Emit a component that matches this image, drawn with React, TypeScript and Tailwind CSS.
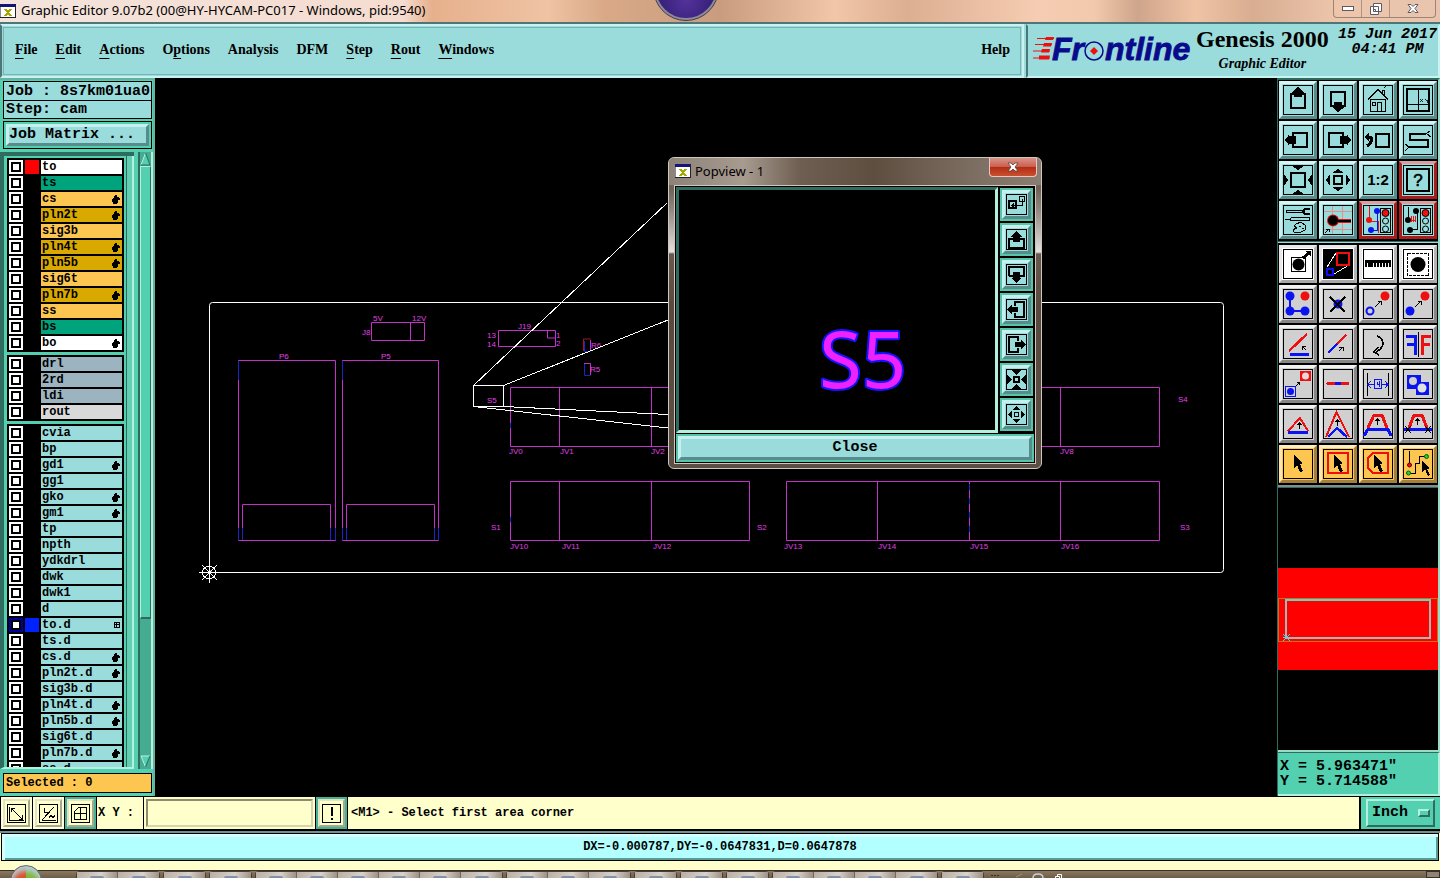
import type { ReactNode } from 'react';

const MONO = "font-['Liberation_Mono',monospace] font-bold";
const SERIF = "font-['Liberation_Serif',serif] font-bold";
const UI = "font-['Noto_Sans',sans-serif]";

/* ---------- layer data ---------- */

type Layer = { name: string; bg: string; hand?: boolean; grid?: boolean; swatch?: string; active?: boolean };

const W = 'bg-white';
const G = 'bg-[#00a47c]';
const A = 'bg-[#fcc650]';
const D = 'bg-[#d9a900]';
const B = 'bg-[#9bb4c0]';
const C = 'bg-[#9adbdb]';

const layerGroups: Layer[][] = [
  [
    { name: 'to', bg: W, swatch: 'bg-[#ff0000]' },
    { name: 'ts', bg: G },
    { name: 'cs', bg: A, hand: true },
    { name: 'pln2t', bg: D, hand: true },
    { name: 'sig3b', bg: A },
    { name: 'pln4t', bg: D, hand: true },
    { name: 'pln5b', bg: D, hand: true },
    { name: 'sig6t', bg: A },
    { name: 'pln7b', bg: D, hand: true },
    { name: 'ss', bg: A },
    { name: 'bs', bg: G },
    { name: 'bo', bg: W, hand: true },
  ],
  [
    { name: 'drl', bg: B },
    { name: '2rd', bg: B },
    { name: 'ldi', bg: B },
    { name: 'rout', bg: 'bg-[#d9d9d9]' },
  ],
  [
    { name: 'cvia', bg: C },
    { name: 'bp', bg: C },
    { name: 'gd1', bg: C, hand: true },
    { name: 'gg1', bg: C },
    { name: 'gko', bg: C, hand: true },
    { name: 'gm1', bg: C, hand: true },
    { name: 'tp', bg: C },
    { name: 'npth', bg: C },
    { name: 'ydkdrl', bg: C },
    { name: 'dwk', bg: C },
    { name: 'dwk1', bg: C },
    { name: 'd', bg: C },
    { name: 'to.d', bg: C, grid: true, swatch: 'bg-[#0022ff]', active: true },
    { name: 'ts.d', bg: C },
    { name: 'cs.d', bg: C, hand: true },
    { name: 'pln2t.d', bg: C, hand: true },
    { name: 'sig3b.d', bg: C },
    { name: 'pln4t.d', bg: C, hand: true },
    { name: 'pln5b.d', bg: C, hand: true },
    { name: 'sig6t.d', bg: C },
    { name: 'pln7b.d', bg: C, hand: true },
    { name: 'ss.d', bg: C },
  ],
];

/* ---------- small pieces ---------- */

function HandIcon() {
  return (
    <svg width="8" height="9" viewBox="0 0 8 9" shapeRendering="crispEdges" aria-hidden="true">
      <path d="M3 0h2v2h2v1h1v2H6v3H5v1H1V7H0V4h1V3h1V1h1z" />
    </svg>
  );
}

function GridMark() {
  return (
    <svg width="6" height="6" viewBox="0 0 6 6" shapeRendering="crispEdges" aria-hidden="true">
      <path d="M.5.5h4.500v4.500h-4.500zM2.500.5v4.500M.5 2.500h4.500" fill="none" stroke="#000" />
    </svg>
  );
}

function LayerRow({ layer }: { layer: Layer }) {
  const id = 'layer-' + layer.name;
  return (
    <li className="mb-0.5 flex h-3.5 gap-0.5">
      <input
        id={id}
        type="checkbox"
        className={
          'size-3.5 shrink-0 appearance-none border-2 bg-white shadow-[inset_0_0_0_2px_#000] ' +
          (layer.active ? 'border-[#0000a0]' : 'border-white')
        }
      />
      <span className={'size-3.5 shrink-0 ' + (layer.swatch ?? '')} />
      <label
        htmlFor={id}
        className={'flex flex-1 items-center justify-between overflow-hidden pl-px pr-0.5 text-[12px] leading-[14px] ' + layer.bg}
      >
        {layer.name}
        {layer.hand && <HandIcon />}
        {layer.grid && <GridMark />}
      </label>
    </li>
  );
}

function XIcon() {
  return (
    <svg width="16" height="16" viewBox="0 0 16 16" className="shrink-0" shapeRendering="crispEdges" aria-hidden="true">
      <rect x="0" y="1" width="15" height="13" fill="#fff" stroke="#8a8a8a" />
      <rect x="0" y="1" width="16" height="3" fill="#14147a" />
      <path d="M0 14.500h16M15.500 2v13" stroke="#222" />
      <path d="M5 6l6 7M11 6l-6 7" stroke="#a5a800" strokeWidth="2" />
    </svg>
  );
}

/* ---------- toolbar icons, drawn on a 30 x 30 grid ---------- */

type Tone = 'cyan' | 'red' | 'white' | 'grey' | 'amber';

const tones: Record<Tone, string> = {
  cyan: 'bg-[#9adbdb] border-t-[#d5f6f6] border-l-[#c6f0f0] border-b-[#588c8c] border-r-[#588c8c]',
  red: 'bg-[#9adbdb] border-[#a81c1c] border-t-[#d8a0a0]',
  white: 'bg-white border-t-[#e8e8e8] border-l-[#e8e8e8] border-b-[#a8a8a8] border-r-[#b4b4b4]',
  grey: 'bg-[#d0d0d0] border-t-[#f2f2f2] border-l-[#e8e8e8] border-b-[#868686] border-r-[#868686]',
  amber: 'bg-[#fcc650] border-t-[#ffeec0] border-l-[#ffe6a8] border-b-[#a5803a] border-r-[#a5803a]',
};

const BLUE = '#0a14f0';
const RED = '#ee1010';
const cursor = 'M11 6l9 8-3 1 3 7-3 1-3-7-3 3z';

const Arrow = ({ d }: { d: string }) => <path d={d} fill="none" stroke="#000" strokeWidth="1" />;
const upArrow = (x: number, y: number) => `M${x} ${y}v6M${x - 2} ${y + 2}l2-2l2 2`;

const topTools: [string, Tone, ReactNode][] = [
  ['Pan up', 'cyan', <><path d="M8 9h14v14H8z" fill="none" stroke="#000" strokeWidth="2" /><path d="M15 2l4 3 2 3h-2v4h-8V8H9l2-3z" /></>],
  ['Pan down', 'cyan', <><path d="M8 7h14v14H8z" fill="none" stroke="#000" strokeWidth="2" /><path d="M15 27l-4-3-2-2h2v-5h8v5h2l-2 2z" /></>],
  ['Home view', 'cyan', <path d="M5 14.500L15 4.500l10 10M7.500 14.500h15v12h-15zM14.500 26V17.500h4V26M9.500 17.500h3v3h-3zM19.500 8V5.500h2V10M21 3l2-2" fill="none" stroke="#000" />],
  ['Screen origin', 'cyan', <><path d="M4 4h22v22H4z" fill="none" stroke="#000" strokeWidth="2" /><path d="M15.500 4v22M4 19.500h22" stroke="#000" /><path d="M17 14l3 3M20 14l-3 3M22 14l2 2 2-2M24 16v2" stroke="#000" fill="none" strokeWidth=".8" /></>],
  ['Pan left', 'cyan', <><path d="M10 8h14v14H10z" fill="none" stroke="#000" strokeWidth="2" /><path d="M2 15l3-4 1-2v2h7v8H6v2l-1-2z" /></>],
  ['Pan right', 'cyan', <><path d="M6 8h14v14H6z" fill="none" stroke="#000" strokeWidth="2" /><path d="M28 15l-3-4-1-2v2h-7v8h7v2l1-2z" /></>],
  ['Previous view', 'cyan', <><path d="M13 9h13v13H13z" fill="none" stroke="#000" strokeWidth="2" /><path d="M4 12h4q2 5-4 9" fill="none" stroke="#000" strokeWidth="3" /><path d="M1 12l5-5v9z" /></>],
  ['Serpentine', 'cyan', <><path d="M23 9H7v6h18v7H6" fill="none" stroke="#000" strokeWidth="2" /><path d="M23 9l4-3M24 9l4 3M6 22l-4-3M6 22l-4 4" stroke="#000" /></>],
  ['Zoom out', 'cyan', <><path d="M8 8h14v14H8z" fill="none" stroke="#000" strokeWidth="2" /><path d="M9 1h12l-6 4zM9 29h12l-6-4zM1 9v12l4-6zM29 9v12l-4-6z" /></>],
  ['Zoom in', 'cyan', <><path d="M11 11h8v8h-8z" fill="none" stroke="#000" strokeWidth="2" /><path d="M9 8h12l-6-4zM9 22h12l-6 4zM7 9v12l-4-6zM23 9v12l4-6z" /></>],
  ['Zoom 1:2', 'cyan', <text x="15" y="20" textAnchor="middle" fontSize="15" fontWeight="bold" fontFamily="Liberation Sans">1:2</text>],
  ['Info', 'red', <><path d="M4 4h22v22H4z" fill="none" stroke="#000" strokeWidth="2" /><text x="15" y="21" textAnchor="middle" fontSize="17" fontFamily="Liberation Sans" stroke="#000" strokeWidth=".6">?</text></>],
  ['Tools', 'cyan', <><path d="M3 6.500h19" stroke="#000" strokeWidth="3" /><path d="M4 6.500h16" stroke="#9adbdb" strokeWidth="1" /><path d="M27 4h-5q-3 2.500 0 5h5" fill="none" stroke="#000" strokeWidth="2" /><path d="M2 14.500h4l3-2h17v3H9l-3-1" fill="none" stroke="#000" /><path d="M11 21q3-4 8-3q6 3 3 7q-5 4-11 2q-2-3 3-4zM16 21h2M19 23h2" fill="none" stroke="#000" /></>],
  ['Snap', 'cyan', <><path d="M9.500 1v28M19.500 1v28M1 6.500h28M1 24.500h28" stroke="#e09090" /><circle cx="10" cy="15.500" r="6" fill={RED} /><path d="M14 15.500h14" stroke={RED} strokeWidth="4" /><circle cx="10" cy="15.500" r="5" /><path d="M14 15.500h14" stroke="#000" strokeWidth="2" /><path d="M2 28l4-4M3 24h3v3" fill="none" stroke="#000" /></>],
  ['Highlight nets', 'red', <><path d="M6 1v15h9v12" fill="none" stroke={RED} /><path d="M14 5v20H8" fill="none" stroke={BLUE} /><circle cx="14" cy="6" r="3" fill={BLUE} /><circle cx="6" cy="15" r="3" fill={RED} /><circle cx="8" cy="25" r="3" fill={BLUE} /><path d="M17.500 3.500h10v24h-10z" fill="none" stroke="#000" /><circle cx="22.500" cy="8" r="3.500" fill={RED} stroke="#000" /><circle cx="22.500" cy="16" r="3" fill="none" stroke="#000" /><circle cx="22.500" cy="24" r="3" fill="none" stroke="#000" /></>],
  ['Net errors', 'red', <><path d="M5 2v12M14 6v18H7" fill="none" stroke="#000" /><path d="M6 15h6M8 11v6M10 11v6M12 11v6" stroke={RED} /><circle cx="13" cy="6" r="3" /><circle cx="5" cy="15" r="3" /><circle cx="7" cy="25" r="3" /><path d="M17.500 3.500h10v24h-10z" fill="none" stroke="#000" /><circle cx="22.500" cy="8" r="3.500" fill={RED} stroke="#000" /><circle cx="22.500" cy="16" r="3" fill="none" stroke="#000" /><circle cx="22.500" cy="24" r="3" fill="none" stroke="#000" /></>],
];

const editTools: [string, Tone, ReactNode][] = [
  ['Feature', 'white', <><path d="M8.500 8.500h14v14h-14z" fill="none" stroke="#000" /><circle cx="15.500" cy="15.500" r="6" /><path d="M20 9l6-5" stroke="#000" strokeWidth="3" /><path d="M22 2h6v6z" /></>],
  ['Zoom area', 'white', <><path d="M1 1h28v28H1z" /><path d="M4 18l9-14M11 25l15-9" stroke="#fff" /><path d="M14 4h12v12H14z" fill="none" stroke={RED} strokeWidth="2" /><path d="M4 20h6v6H4z" fill="none" stroke={BLUE} strokeWidth="2" /></>],
  ['Measure', 'white', <path d="M2 11h26v7h-2v-4h-1v4h-2v-4h-1v4h-2v-4h-1v4h-2v-4h-1v4h-2v-4h-1v4h-2v-4h-1v4h-2v-4h-1v4H8v-4H7v4H5v-4H4v4H2z" />],
  ['Select area', 'white', <><path d="M4.500 4.500h21v22h-21z" fill="none" stroke="#000" strokeDasharray="3 1" /><circle cx="15" cy="15.500" r="7.500" /></>],
  ['Move points', 'grey', <><path d="M7 7v15h15" fill="none" stroke={BLUE} strokeWidth="2" /><circle cx="7" cy="7" r="4.500" fill={BLUE} /><circle cx="7" cy="22" r="4.500" fill={BLUE} /><circle cx="22" cy="22" r="4.500" fill={BLUE} /><circle cx="22" cy="7" r="4.500" fill={RED} /></>],
  ['Delete', 'grey', <><circle cx="15" cy="15" r="4.500" fill={BLUE} /><path d="M7 8l15 15M22 8L7 23" stroke="#000" strokeWidth="2" /></>],
  ['Copy', 'grey', <><circle cx="7" cy="22" r="3.500" fill="none" stroke={BLUE} strokeWidth="2" /><circle cx="22" cy="7" r="4.500" fill={RED} /><Arrow d="M12 18l6-6M14.500 12h4v4" /></>],
  ['Move', 'grey', <><circle cx="7" cy="22" r="4.500" fill={BLUE} /><circle cx="22" cy="7" r="4.500" fill={RED} /><Arrow d="M12 18l6-6M14.500 12h4v4" /></>],
  ['Change angle', 'grey', <><path d="M6 22L24 5" stroke={RED} strokeWidth="2.500" /><path d="M7 25h19" stroke={BLUE} strokeWidth="3" /><Arrow d="M23 21l-4-4M19 21v-4h4" /></>],
  ['Extend line', 'grey', <><path d="M5 24l9-9" stroke={BLUE} strokeWidth="2.500" /><path d="M14 15l9-9" stroke={RED} strokeWidth="2.500" /><Arrow d="M16 22l4-4M16 18h4v4" /></>],
  ['Rotate', 'grey', <><path d="M14 7q6 2 6 8q-1 5-7 8" fill="none" stroke="#000" strokeWidth="1.500" /><path d="M15 18l-4 5 5 3" fill="none" stroke="#000" strokeWidth="1.500" /></>],
  ['Mirror', 'grey', <><path d="M3 7h9v19M4 15h8" fill="none" stroke={BLUE} strokeWidth="3" /><path d="M28 7h-9v19M27 15h-8" fill="none" stroke={RED} strokeWidth="3" /><path d="M15.500 3v25" stroke="#000" /></>],
  ['Scale', 'grey', <><path d="M17 2h11v10H17z" fill={RED} /><circle cx="22.500" cy="7" r="3.500" fill="#e8d8d8" /><path d="M2.500 17.500h10v10h-10z" fill="#d0d0d0" stroke={BLUE} /><circle cx="7.500" cy="22.500" r="3.500" fill={BLUE} /><Arrow d="M13 17l3-3M14 13.500h2.500v2.500" /></>],
  ['Break line', 'grey', <><path d="M5 14.500h20" stroke={RED} strokeWidth="3" strokeLinecap="round" /><path d="M12 14.500h6" stroke={BLUE} strokeWidth="3" /></>],
  ['Spacing', 'grey', <><path d="M4.500 4v23M25.500 4v23" stroke="#000" /><path d="M11.500 10.500h7v9h-7zM5 15.500h6M8 12l-3 3.500 3 3.500M19 15.500h6M22 12l3 3.500-3 3.500" fill="none" stroke={BLUE} /><path d="M14 12.500v3h3M16.500 12v6" fill="none" stroke={BLUE} /></>],
  ['Merge', 'grey', <><path d="M4 6h14v7h8v13H13v-6H4z" fill={BLUE} /><circle cx="10" cy="12" r="4" fill="#d0d0d0" /><circle cx="19" cy="19" r="4.500" fill="#e0e0e0" /></>],
  ['Triangle', 'grey', <><path d="M5 22L17 9l8 13" fill="none" stroke={RED} strokeWidth="2" /><path d="M5 23h20" stroke={BLUE} strokeWidth="3" /><Arrow d={upArrow(16.5, 14)} /></>],
  ['Peak', 'grey', <><path d="M3 28L13.500 3 26 28" fill="none" stroke={RED} strokeWidth="2" /><path d="M5 28l9-9 10 9" fill="none" stroke={BLUE} strokeWidth="2.500" /><Arrow d={upArrow(14.5, 11)} /></>],
  ['Arc shape', 'grey', <><path d="M5 19l6-13h8l5 13" fill="none" stroke={RED} strokeWidth="3" /><path d="M1 27l4-7h20l3 7" fill="none" stroke={BLUE} strokeWidth="3" /><Arrow d={upArrow(14.5, 10)} /></>],
  ['Trim shape', 'grey', <><path d="M6 19l5-13h8l5 13" fill="none" stroke={RED} strokeWidth="3" /><path d="M1 20.500h28" stroke={BLUE} strokeWidth="2.500" /><path d="M2 17l6 7M8 17l-6 7M22 17l6 7M28 17l-6 7" stroke="#000" /><Arrow d={upArrow(14.5, 10)} /></>],
  ['Select', 'amber', <path d={cursor} />],
  ['Select in frame', 'amber', <><path d="M5 4h20v20H5z" fill="none" stroke={RED} strokeWidth="2" /><path d={cursor} /></>],
  ['Select in polygon', 'amber', <><path d="M10 4h15v20H10l-5-5V9z" fill="none" stroke={RED} strokeWidth="2" /><path d={cursor} /></>],
  ['Select net', 'amber', <><path d="M6.500 2v13M6 24.500h6v-10h4v-7h8" fill="none" stroke="#000" /><circle cx="6.500" cy="16" r="2" fill={RED} stroke="#600" /><circle cx="5.500" cy="24" r="2" fill="#20d040" stroke="#060" /><circle cx="23.500" cy="7.500" r="2" fill="#20d040" stroke="#060" /><path d="M19 12l8 7-3 1 3 6-2 1-3-7-3 3z" /></>],
];

function ToolButton({ label, tone, children }: { label: string; tone: Tone; children: ReactNode }) {
  return (
    <button type="button" aria-label={label} className={'size-[38px] border-3 p-px ' + tones[tone]}>
      <svg viewBox="0 0 30 30" className="block size-full [&_circle]:[shape-rendering:auto]" shapeRendering="crispEdges" aria-hidden="true">
        <path d="M.5.5h29v29H.5z" fill="none" stroke="#000" />
        {children}
      </svg>
    </button>
  );
}

function ToolGrid({ items }: { items: [string, Tone, ReactNode][] }) {
  return (
    <div className="grid grid-cols-4 gap-0.5 bg-black px-px">
      {items.map(([label, tone, art]) => (
        <ToolButton key={label} label={label} tone={tone}>
          {art}
        </ToolButton>
      ))}
    </div>
  );
}

/* ---------- popview window ---------- */

const popTools: [string, ReactNode][] = [
  ['Drag view', <path d="M2.500 6.500h8v8h-8zM3.500 7.500h6v6h-6zM13.500 2.500h5v5h-5zM16.500 5v6.500H6M8 9.500l-2 2 2 2" fill="none" stroke="#000" />],
  ['View up', <><path d="M3 10h5M14 10h4v9H3V9" fill="none" stroke="#000" strokeWidth="2" /><path d="M10.500 2L16 8h-2v5H7V8H5z" /></>],
  ['View down', <><path d="M3 12V3h15v9h-4M3 12h5" fill="none" stroke="#000" strokeWidth="2" /><path d="M10.500 19L16 14h-2V8H7v6H5z" /></>],
  ['View left', <><path d="M9 7V3h9v15H9v-4" fill="none" stroke="#000" strokeWidth="2" /><path d="M1 10.500L6 5v3h6v5H6v3z" /></>],
  ['View right', <><path d="M12 7V3H3v15h9v-4" fill="none" stroke="#000" strokeWidth="2" /><path d="M20 10.500L15 5v3H9v5h6v3z" /></>],
  ['View zoom out', <><path d="M8 8h5v5H8z" fill="none" stroke="#000" strokeWidth="2" /><path d="M5 1h11l-5.500 5zM5 20h11l-5.500-5zM1 5v11l5-5.500zM20 5v11l-5-5.500z" /></>],
  ['View zoom in', <><path d="M8.500 8.500h4v4h-4z" fill="none" stroke="#000" /><path d="M6 6h9l-4.500-4zM6 15h9l-4.500 4zM6 6v9l-4-4.500zM15 6v9l4-4.500z" /></>],
];

function Popview() {
  return (
    <section
      aria-label="Popview"
      className="absolute left-[513px] top-[79px] flex w-[374px] flex-col rounded-md border border-[#cfc6bd] bg-[linear-gradient(180deg,#857a70_0px,#6e6157_30px,#8d857d_50px,#e4e1de_94px,#67594e_96px,#57493d_150px,#5b4e43_100%)] px-[5px] pb-1"
    >
      <header className="-mx-[5px] flex h-[27px] items-start rounded-t-md bg-[linear-gradient(90deg,#8d8278,#a79b90_20%,#6f5f52_35%,#5e4e40_55%,#7b6c60_80%,#8a7d73)] pl-1.5 pr-1">
        <span className="flex flex-1 items-center gap-1 pt-1">
          <XIcon />
          <h2 className={UI + ' text-[13px] leading-[18px] text-black'}>Popview - 1</h2>
        </span>
        <button
          type="button"
          aria-label="Close window"
          className="flex h-[19px] w-12 items-center justify-center rounded-b border border-t-0 border-[#efc4bb] bg-[linear-gradient(180deg,#dc9388,#c9604f_48%,#b32d15_52%,#c9502f)]"
        >
          <svg width="12" height="10" viewBox="0 0 12 10" aria-hidden="true">
            <path d="M1 1h3l2 2 2-2h3L8 5l3 4H8L6 7 4 9H1l3-4z" fill="#fff" stroke="#5a3a38" strokeWidth=".8" />
          </svg>
        </button>
      </header>
      <div className="flex flex-col border border-[#cfc6bd] bg-black p-px">
        <div className="flex gap-0.5 pr-px">
          <svg className="h-[246px] flex-1 border-3 border-b-[#b5f0df] border-l-[#2f6b5e] border-r-[#b5f0df] border-t-[#2f6b5e]" aria-label="Zoomed feature">
            <text
              x="140"
              y="198"
              fontSize="78"
              fontFamily="Noto Sans"
              fill="#ee22ff"
              stroke="#1414ff"
              strokeWidth="4"
              strokeLinejoin="round"
              paintOrder="stroke"
            >
              S5
            </text>
          </svg>
          <div className="flex flex-col gap-0.5 pt-px">
            {popTools.map(([label, art]) => (
              <button key={label} type="button" aria-label={label} className="size-[33px] border-2 border-[#55c4a8] bg-[#9adbdb]">
                <span className="block size-full border-3 border-b-[#588c8c] border-l-[#c6f0f0] border-r-[#588c8c] border-t-[#c6f0f0] p-px">
                  <svg viewBox="0 0 21 21" className="block size-full" shapeRendering="crispEdges" aria-hidden="true">
                    <path d="M.5.5h20v20H.5z" fill="none" stroke="#000" />
                    {art}
                  </svg>
                </span>
              </button>
            ))}
          </div>
        </div>
        <button
          type="button"
          className={MONO + ' mt-px h-7 border-2 border-[#55c4a8] bg-[#9adbdb] text-[15px] leading-[18px]'}
        >
          <span className="block border-3 border-b-[#588c8c] border-l-[#c6f0f0] border-r-[#588c8c] border-t-[#c6f0f0]">Close</span>
        </button>
      </div>
    </section>
  );
}

/* ---------- board drawing ---------- */

const boardLabels: [number, number, string][] = [
  [373, 321, '5V'], [412, 321, '12V'], [362, 335, 'J8'], [518, 329, 'J19'], [487, 338, '13'], [487, 347, '14'],
  [556, 338, '1'], [556, 346, '2'], [279, 359, 'P6'], [381, 359, 'P5'], [591, 348, 'R6'], [590, 372, 'R5'],
  [487, 403, 'S5'], [509, 454, 'JV0'], [560, 454, 'JV1'], [651, 454, 'JV2'], [1060, 454, 'JV8'], [1178, 402, 'S4'],
  [491, 530, 'S1'], [757, 530, 'S2'], [1180, 530, 'S3'], [510, 549, 'JV10'], [562, 549, 'JV11'], [653, 549, 'JV12'],
  [784, 549, 'JV13'], [878, 549, 'JV14'], [970, 549, 'JV15'], [1061, 549, 'JV16'],
];

function BoardCanvas() {
  return (
    <svg className="block size-full" aria-label="Board drawing">
      <g transform="translate(-155 -78)" fill="none">
        <rect x="209.500" y="302.500" width="1014" height="270" rx="3" stroke="#fff" />
        <g stroke="#c431c8">
          <path d="M371.500 322.500h53v18h-53zM410.500 322v18" />
          <path d="M498.500 330.500h57v16h-57zM547.500 330v8h8" />
          <path d="M238.500 360.500h97v180h-97zM242.500 540V504.500h88V540" />
          <path d="M342.500 360.500h96v180h-96zM346.500 540V504.500h88V540" />
          <path d="M510.500 387.500h239v59h-239zM559.500 387v59M651.500 387v59" />
          <path d="M786.500 387.500h373v59h-373zM877.500 387v59M969.500 387v59M1060.500 387v59" />
          <path d="M510.500 481.500h239v59h-239zM559.500 481v59M651.500 481v59" />
          <path d="M786.500 481.500h373v59h-373zM877.500 481v59M969.500 481v59M1060.500 481v59" />
          <path d="M590.500 340v11M584 363.500h6.500V375" />
        </g>
        <path
          d="M238.500 361v19M342.500 361v19M238.500 528v12M242.500 528v12M330.500 528v12M335.500 528v12M342.500 528v12M346.500 528v12M434.500 528v12M438.500 528v12M510.500 423v5M510.500 517v5M584.500 341v10.500h6M584.500 364v11.500h6"
          stroke="#1626c8"
        />
        <path d="M969.500 484v54" stroke="#1626c8" strokeDasharray="6 8" />
        <path d="M583.500 351v-12h7" stroke="#a01818" />
        <g fill="#e040e6" fontSize="8" fontFamily="Liberation Sans">
          {boardLabels.map(([x, y, t]) => (
            <text key={t} x={x} y={y}>
              {t}
            </text>
          ))}
        </g>
        <g stroke="#fff" shapeRendering="crispEdges">
          <path d="M473.500 385.500h30v21h-30z" />
          <path d="M473.500 385.500L667 203M503.500 385.500L668 320M503.500 406.500L668 414.500M473.500 406.500L668 428" />
          <circle cx="209" cy="572.500" r="6.500" />
          <path d="M199 572.500h20M209.500 562v21M202 565l15 15M217 565l-15 15" />
        </g>
      </g>
    </svg>
  );
}

/* ---------- page parts ---------- */

function TitleBar() {
  return (
    <div className="relative flex h-[22px] shrink-0 items-center overflow-hidden bg-[linear-gradient(90deg,#f3e4dc,#f5dcd0_28%,#e6b08c_30%,#efc3a4_38%,#d9a987_42%,#c99c80_50%,#f2c6a8_58%,#dcae92_63%,#f6cdb2_72%,#f3c9ad_76%,#cfa58b_79%,#f0c3a5_83%,#d8ad91_87%,#edc6ac_93%,#e8c4ae)] pr-1">
      <XIcon />
      <h1 className={UI + ' flex-1 pl-[5px] text-[13px] text-black'}>
        Graphic Editor 9.07b2 (00@HY-HYCAM-PC017 - Windows, pid:9540)
      </h1>
      <span className="absolute -top-11 left-1/2 ml-[-66px] size-16 rounded-full border-2 border-[#8b8a9a] bg-[radial-gradient(circle_at_50%_70%,#54339c,#1d0f58)] outline-1 outline-[#3c3a50]" />
      <div className="flex h-[18px] self-start rounded-b border border-t-0 border-[#a08472]">
        <button type="button" aria-label="Minimize" className="flex w-7 items-center justify-center border-r border-[#b2937f]">
          <svg width="12" height="6" viewBox="0 0 12 6" aria-hidden="true">
            <rect x=".5" y=".5" width="11" height="4" fill="#fff" stroke="#5b5b66" />
          </svg>
        </button>
        <button type="button" aria-label="Restore" className="flex w-7 items-center justify-center border-r border-[#b2937f]">
          <svg width="12" height="12" viewBox="0 0 12 12" aria-hidden="true">
            <path d="M3.500.5h8v8h-8zM.5 3.500h8v8h-8z" fill="#fff" stroke="#5b5b66" />
            <path d="M3.500 6.500h2v2h-2z" fill="none" stroke="#5b5b66" />
          </svg>
        </button>
        <button type="button" aria-label="Close" className="flex w-[45px] items-center justify-center">
          <svg width="12" height="11" viewBox="0 0 12 10" aria-hidden="true">
            <path d="M1 1h3l2 2 2-2h3L8 5l3 4H8L6 7 4 9H1l3-4z" fill="#fff" stroke="#5b5b66" />
          </svg>
        </button>
      </div>
    </div>
  );
}

const menus: [string, string, string][] = [
  ['', 'F', 'ile'], ['', 'E', 'dit'], ['', 'A', 'ctions'], ['O', 'p', 'tions'], ['Analysis', '', ''], ['DFM', '', ''],
  ['', 'S', 'tep'], ['', 'R', 'out'], ['', 'W', 'indows'],
];

function Logo() {
  return (
    <svg width="162" height="40" viewBox="0 -7 162 40" role="img" aria-label="Frontline" className="shrink-0">
      <path d="M5 2.500h17M3 8.500h17M1 15h17M1 22h17" stroke={RED} strokeWidth="1" />
      <path d="M14 1h8l-1 3h-8zM12 7h8l-1 3.500h-8zM10 13h8l-1 3.500h-8zM7 19.500h11l-1 4H7z" fill={RED} />
      <g fill="#0a0a8c" stroke="#0a0a8c" strokeWidth=".8" fontFamily="Liberation Sans" fontWeight="bold" fontStyle="italic" fontSize="32">
        <text x="20" y="24">Fr</text>
        <text x="73" y="24">ntline</text>
      </g>
      <circle cx="62" cy="15" r="9" fill="#9adbdb" stroke="#0a0a8c" strokeWidth="1.500" />
      <path d="M62 11l4 4-4 4-4-4z" fill={RED} />
    </svg>
  );
}

function Header() {
  return (
    <header className="flex h-14 shrink-0 gap-0.5 border-t-2 border-[#4f7676] bg-[#9adbdb]">
      <nav
        aria-label="Main"
        className={SERIF + ' flex flex-1 items-center gap-[18px] border-2 border-[#c9f2f2] border-l-[#4f7676] pb-1 pl-[13px] pr-3 text-[14px] outline-1 -outline-offset-4 outline-[#79b4b4]'}
      >
        {menus.map(([a, u, b]) => (
          <button key={a + u + b} type="button">
            {a}
            <span className="underline underline-offset-4">{u}</span>
            {b}
          </button>
        ))}
        <button type="button" className="ml-auto">
          Help
        </button>
      </nav>
      <div className="flex w-[414px] items-start border-2 border-b-[#c9f2f2] border-l-[#4f7676] border-r-[#c9f2f2] border-t-[#9adbdb]">
        <div className="pl-1 pt-[3px]">
          <Logo />
        </div>
        <div className={SERIF + ' flex flex-col items-center whitespace-nowrap pl-0.5 text-center'}>
          <span className="text-[24px] leading-[26px]">Genesis 2000</span>
          <span className="text-[14px] italic leading-6">Graphic Editor</span>
        </div>
        <div className={MONO + ' ml-auto whitespace-nowrap pr-px pt-px text-center text-[15px] italic leading-[15px]'}>
          <p>15 Jun 2017</p>
          <p>04:41 PM</p>
        </div>
      </div>
    </header>
  );
}

function LayerPanel() {
  return (
    <aside className={MONO + ' flex w-[155px] shrink-0 flex-col border-r-2 border-t-2 border-[#63b3a0] bg-[#52d0b0] pl-[3px]'}>
      <dl className="mr-px mt-px text-[15px] leading-[17px]">
        <div className="flex h-5 items-center whitespace-pre border border-black bg-[#9adbdb] pl-0.5">
          <dt>{'Job : '}</dt>
          <dd>8s7km01ua0</dd>
        </div>
        <div className="-mt-px flex h-[19px] items-center whitespace-pre border border-black bg-[#9adbdb] pl-0.5">
          <dt>{'Step: '}</dt>
          <dd>cam</dd>
        </div>
      </dl>
      <div className="mr-px mt-0.5 border border-black p-0.5">
        <button
          type="button"
          className="block h-[22px] w-full border-3 border-b-[#588c8c] border-l-[#c6f0f0] border-r-[#588c8c] border-t-[#c6f0f0] bg-[#9adbdb] text-left text-[15px] leading-4"
        >
          Job Matrix ...
        </button>
      </div>
      <div className="-ml-[3px] mt-[3px] flex min-h-0 flex-1">
        <div className="flex min-h-0 flex-1 border-b-2 border-l-4 border-t-4 border-b-[#b5f0df] border-l-[#2f6b5e] border-t-[#2f6b5e] pl-[3px]">
          <ul className="flex w-[117px] flex-col gap-[3px] overflow-hidden pt-0.5">
            {layerGroups.map((group, i) => (
              <li key={i} className="bg-black px-0.5 pt-0.5">
                <ul>
                  {group.map((layer) => (
                    <LayerRow key={layer.name} layer={layer} />
                  ))}
                </ul>
              </li>
            ))}
          </ul>
          <span className="ml-0.5 flex-1 border-l border-r-2 border-l-[#2f6b5e] border-r-[#b5f0df] bg-[#62cfb4]" />
        </div>
        <div className="ml-1 flex w-[15px] flex-col border-l-2 border-r-2 border-l-[#2f6b5e] border-r-[#b5f0df] bg-[#45ac92]">
          <svg viewBox="0 0 11 14" className="h-3.5 w-full" aria-hidden="true">
            <path d="M5.500 1L1 13h9z" fill="#52d0b0" />
            <path d="M5.500 1L1 13" stroke="#b5f0df" fill="none" />
            <path d="M5.500 1L10 13H1" stroke="#2f6b5e" fill="none" />
          </svg>
          <div className="flex-[453] border border-b-2 border-b-[#2f6b5e] border-l-[#b5f0df] border-r-[#2f6b5e] border-t-[#b5f0df] bg-[#52d0b0]" />
          <div className="flex-[137]" />
          <svg viewBox="0 0 11 14" className="h-3.5 w-full" aria-hidden="true">
            <path d="M1 1h9L5.500 12z" fill="#52d0b0" />
            <path d="M5.500 12L1 1h9" stroke="#b5f0df" fill="none" />
            <path d="M5.500 12L10 1" stroke="#2f6b5e" fill="none" />
          </svg>
        </div>
      </div>
      <p className="mb-[3px] mr-px mt-1 h-5 border border-black bg-[#fcc650] pl-0.5 text-[12px] leading-[18px]">Selected : 0</p>
    </aside>
  );
}

function RightPanel() {
  return (
    <aside className="flex w-[163px] shrink-0 flex-col border-l border-r-2 border-t-2 border-[#2f6b5e] border-r-[#9adbc8] bg-black pt-px">
      <ToolGrid items={topTools} />
      <div className="my-0.5 h-0.5 shrink-0 border-t border-[#2f6b5e] bg-[#9adbdb]" />
      <ToolGrid items={editTools} />
      <div className="mt-0.5 h-[3px] shrink-0 border-b border-[#2f6b5e] bg-[#8a8a8a]" />
      <div className="flex min-h-0 flex-1 flex-col border-b-2 border-[#9adbc8] bg-black pt-20">
        <svg className="block h-[102px] w-full bg-[#ff0000]" viewBox="0 0 160 102" preserveAspectRatio="none" aria-label="Board overview">
          <path d="M.5 30.500h159v43H.5z" fill="none" stroke="#c07820" />
          <rect x="8" y="32" width="144" height="38" fill="none" stroke="#a8b8b4" strokeWidth="2" />
          <path d="M7 32h146" stroke="#70cfc0" strokeWidth="2" />
          <path d="M5 66l7 7M12 66l-7 7M5 69.500h7" stroke="#52d8e0" />
        </svg>
      </div>
      <div className={MONO + ' -mr-0.5 flex h-11 shrink-0 flex-col justify-center whitespace-pre border-b-2 border-r-2 border-t border-b-[#b5f0df] border-r-[#b5f0df] border-t-[#2f6b5e] bg-[#52d0b0] pl-0.5 text-[15px] leading-[15px]'}>
        <p>{'X = 5.963471"'}</p>
        <p>{'Y = 5.714588"'}</p>
      </div>
    </aside>
  );
}

function StatusButton({ label, mint, children }: { label: string; mint?: boolean; children: ReactNode }) {
  return (
    <button
      type="button"
      aria-label={label}
      className={'h-8 w-[31px] shrink-0 border-2 bg-[#ffffcc] ' + (mint ? 'border-[#45b39a]' : 'border-[#ffffe0]')}
    >
      <span className="flex size-full items-center border-2 border-b-[#a8a88a] border-l-[#e4e4c0] border-r-[#a8a88a] border-t-[#e4e4c0] px-0.5">
        <svg viewBox="0 0 19 19" className="block size-[19px]" shapeRendering="crispEdges" aria-hidden="true" fill="none" stroke="#000">
          <path d="M.5.5h18v18H.5z" />
          {children}
        </svg>
      </span>
    </button>
  );
}

function StatusBar() {
  return (
    <div className={MONO + ' flex h-[35px] shrink-0 gap-px bg-black pb-0.5 pl-px pt-px text-[12px]'}>
      <StatusButton label="Relative"><path d="M4 4l11 11M4 7.500V4.500h4M15.500 11v4.500h-4M2.500 2.500v14h14" /></StatusButton>
      <StatusButton label="Angle"><path d="M2.500 16.500h14M3 16L15 3M5.500 4v4h3M10 14l2-3 2 3M16 11l-2 3" /></StatusButton>
      <StatusButton label="Grid" mint><path d="M3.500 7.500l4-4h8v12h-12zM9.500 3v13M3 9.500h13" /></StatusButton>
      <label htmlFor="xy" className="flex w-[46px] shrink-0 items-center whitespace-pre bg-[#ffffcc] pl-px">X Y :</label>
      <div className="w-[171px] shrink-0 bg-[#ffffcc] p-0.5">
        <input
          id="xy"
          className="block h-7 w-full border-2 border-b-[#d6d6ac] border-l-[#8c8c70] border-r-[#d6d6ac] border-t-[#8c8c70] bg-[#ffffcc] px-1"
        />
      </div>
      <StatusButton label="Message" mint><path d="M9.500 3v9M9.500 14v2" strokeWidth="2" /></StatusButton>
      <p className="flex flex-1 items-center bg-[#ffffcc] pl-[3px]">&lt;M1&gt; - Select first area corner</p>
      <div className="ml-px flex w-[79px] shrink-0 items-center justify-center bg-[#52d0b0]">
        <label className="flex h-7 w-[69px] items-center border-2 border-b-[#2f6b5e] border-l-[#b5f0df] border-r-[#2f6b5e] border-t-[#b5f0df] pl-1">
          <select aria-label="Units" className="w-[46px] appearance-none bg-transparent text-[15px] leading-5">
            <option>Inch</option>
            <option>mm</option>
          </select>
          <span className="h-2 w-3 border-2 border-b-[#2f6b5e] border-l-[#b5f0df] border-r-[#2f6b5e] border-t-[#b5f0df]" />
        </label>
      </div>
    </div>
  );
}

const taskGroups: number[] = [2, 1, 1, 6, 3, 1, 1, 1, 4, 1];

function Taskbar() {
  return (
    <div className="relative flex h-2 shrink-0 gap-[3px] border-t border-[#3a3026] bg-[linear-gradient(180deg,#8a7860,#6d5c48)] pl-[76px]">
      <span className="absolute -top-1.5 left-2.5 size-8 overflow-hidden rounded-full border border-[#5b6f80] bg-[conic-gradient(at_50%_55%,#7cb83a_0_90deg,#e8b62c_0_180deg,#3f86c8_0_270deg,#d9532c_0)] shadow-[inset_0_5px_5px_#b9cbd8]" />
      {taskGroups.map((n, i) => (
        <span key={i} className="flex divide-x divide-[#76675a] rounded-t border border-b-0 border-[#4a3e34]">
          {Array.from({ length: n }, (_, k) => (
            <span key={k} className="flex h-full w-[41px] items-end justify-center bg-[linear-gradient(100deg,#b8aea4,#d8d2cb_60%,#9c9084)]">
              <span className="h-0.5 w-3.5 rounded-t-full bg-[#7f92a8]" />
            </span>
          ))}
        </span>
      ))}
      <svg width="80" height="7" viewBox="0 0 80 7" aria-hidden="true">
        <path d="M4 4.500h8" stroke="#3a2e22" strokeDasharray="2 1" />
        <path d="M29 6l6-3" stroke="#9a9088" />
        <path d="M46 7q0-4 5-4t5 4" fill="none" stroke="#c8d0e0" strokeWidth="1.500" />
        <path d="M68.500 7V5.500h4V7M70.500 5V3.500h4V7" fill="none" stroke="#fff" />
      </svg>
      <span className="ml-auto w-3.5 border border-[#3a3026] bg-[#8f8376]" />
    </div>
  );
}

export default function App() {
  return (
    <div className="flex h-screen flex-col overflow-hidden bg-black text-black">
      <TitleBar />
      <Header />
      <div className="flex min-h-0 flex-1">
        <LayerPanel />
        <main className="relative min-w-0 flex-1 overflow-hidden bg-black">
          <BoardCanvas />
          <Popview />
        </main>
        <RightPanel />
      </div>
      <StatusBar />
      <div className={MONO + ' shrink-0 border-t-2 border-[#6f9292] bg-[#ffffcc] pb-[9px]'}>
        <p className="mx-px h-7 border border-black bg-[#b3ffff] pt-0.5 text-center text-[12px] leading-[22px] shadow-[inset_0_3px_0_#d8ffff,inset_3px_0_0_#d8ffff,inset_0_-2px_0_#5f9a9a,inset_-2px_0_0_#5f9a9a]">
          DX=-0.000787,DY=-0.0647831,D=0.0647878
        </p>
      </div>
      <Taskbar />
    </div>
  );
}
